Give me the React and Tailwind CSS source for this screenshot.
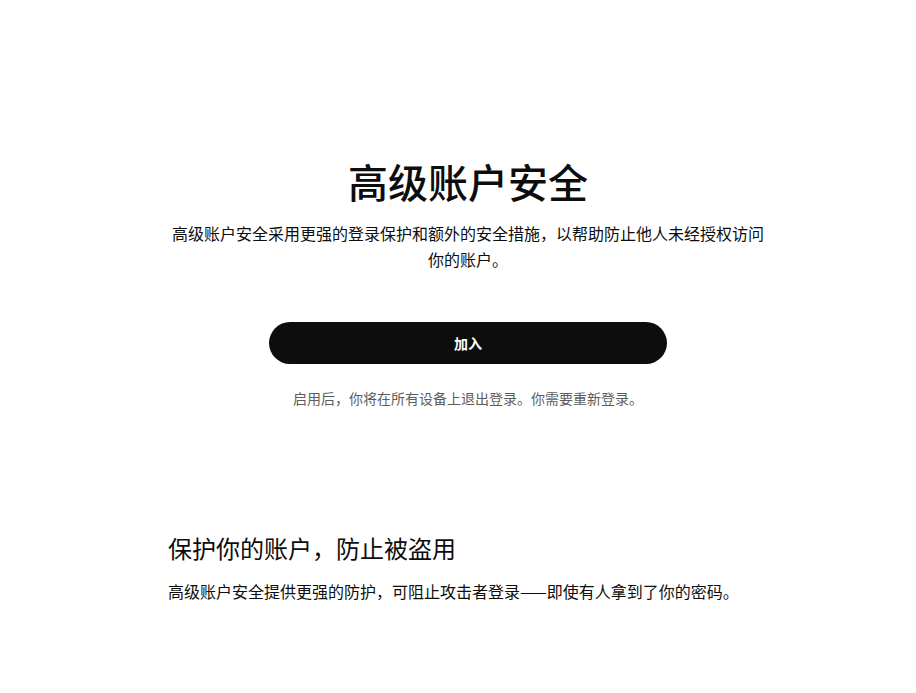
import React from 'react';

const font = { fontFamily: '"Noto Sans CJK SC", "Noto Sans", sans-serif' };

export default function App() {
  return (
    <div className="min-h-[693px] bg-white pl-5 text-[#0d0d0d]" style={font}>
      <div className="mx-auto max-w-[600px] pt-[157px]">
        <div className="flex flex-col items-center text-center">
          <h1 className="text-[40px] font-medium leading-[48px]">高级账户安全</h1>
          <p className="mt-[15px] text-base leading-[26px] text-[#0d0d0d]">
            高级账户安全采用更强的登录保护和额外的安全措施，以帮助防止他人未经授权访问你的账户。
          </p>
          <button className="mt-[50px] h-[42px] w-[398px] rounded-full bg-[#0d0d0d] text-sm font-semibold text-white">
            加入
          </button>
          <p className="mt-6 text-sm leading-5 text-[#5d5d5d]">
            启用后，你将在所有设备上退出登录。你需要重新登录。
          </p>
        </div>
        <div className="mt-[124px]">
          <h2 className="text-2xl leading-8 font-normal">保护你的账户，防止被盗用</h2>
          <p className="mt-[15px] text-base leading-6">
            高级账户安全提供更强的防护，可阻止攻击者登录——即使有人拿到了你的密码。
          </p>
        </div>
      </div>
    </div>
  );
}
